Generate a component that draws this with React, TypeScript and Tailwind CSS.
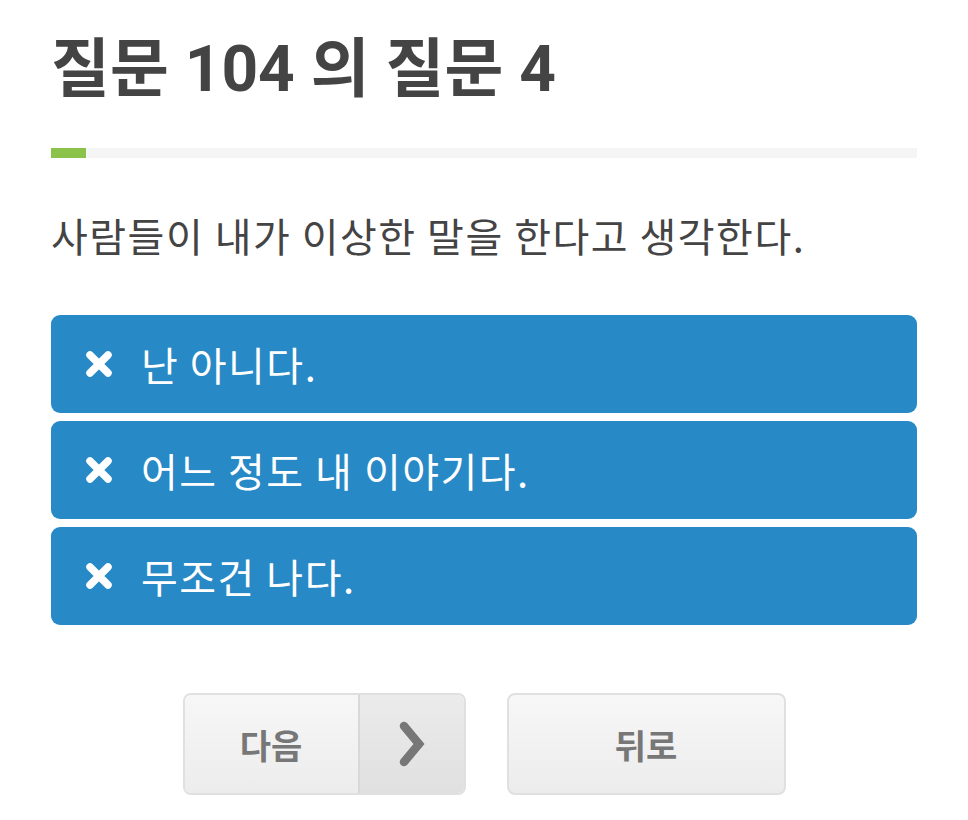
const options = ['난 아니다.', '어느 정도 내 이야기다.', '무조건 나다.']

function CrossIcon() {
    return (
        <svg width="28" height="28" viewBox="0 0 28 28" className="shrink-0">
            <path d="M5 5 L23 23 M23 5 L5 23" stroke="white" strokeWidth="7.5" strokeLinecap="round" />
        </svg>
    )
}

function OptionButton({ label }: { label: string }) {
    return (
        <button
            type="button"
            className="flex items-center w-full h-[98px] rounded-[9px] bg-[#2789c6] text-white text-[40px] tracking-[1.5px] px-[34px] gap-[28px] text-left"
        >
            <CrossIcon />
            <span>{label}</span>
        </button>
    )
}

export default function App() {
    return (
        <main
            className="w-[968px] h-[820px] bg-white px-[51px] pt-[30px] text-[#444]"
            style={{ fontFamily: 'Roboto, "Noto Sans CJK KR", sans-serif' }}
        >
            <h1 className="text-[64px] font-bold leading-[80px]">질문 104 의 질문 4</h1>

            {/* progress */}
            <div className="mt-[38px] h-[10px] w-full bg-[#f5f5f5]">
                <div className="h-full w-[35px] bg-[#8bc34a]" />
            </div>

            <p
                className="mt-[52px] text-[40px] leading-[50px] tracking-[1.5px]"
                style={{ fontFamily: '"Noto Sans CJK KR", sans-serif' }}
            >
                사람들이 내가 이상한 말을 한다고 생각한다.
            </p>

            <div className="mt-[55px] flex flex-col gap-[8px]" style={{ fontFamily: '"Noto Sans CJK KR", sans-serif' }}>
                {options.map((o) => (
                    <OptionButton key={o} label={o} />
                ))}
            </div>

            <div className="mt-[68px] flex justify-center gap-[41px]" style={{ fontFamily: '"Noto Sans CJK KR", sans-serif' }}>
                <div className="flex h-[102px] w-[283px] rounded-[8px] border-2 border-[#e0e0e0] overflow-hidden text-[#777] font-bold text-[34px]">
                    <div className="flex-1 flex items-center justify-center bg-gradient-to-b from-[#f7f7f7] to-[#ececec]">다음</div>
                    <div className="w-[106px] flex items-center justify-center border-l-2 border-[#d8d8d8] bg-gradient-to-b from-[#ebebeb] to-[#e0e0e0]">
                        <svg width="28" height="46" viewBox="0 0 28 46" fill="none">
                            <path d="M6 5 L21 23 L6 41" stroke="#777" strokeWidth="8.5" strokeLinecap="round" strokeLinejoin="miter" />
                        </svg>
                    </div>
                </div>
                <div className="flex h-[102px] w-[279px] items-center justify-center rounded-[8px] border-2 border-[#e0e0e0] bg-gradient-to-b from-[#f7f7f7] to-[#ececec] text-[#777] font-bold text-[34px]">
                    뒤로
                </div>
            </div>
        </main>
    )
}
